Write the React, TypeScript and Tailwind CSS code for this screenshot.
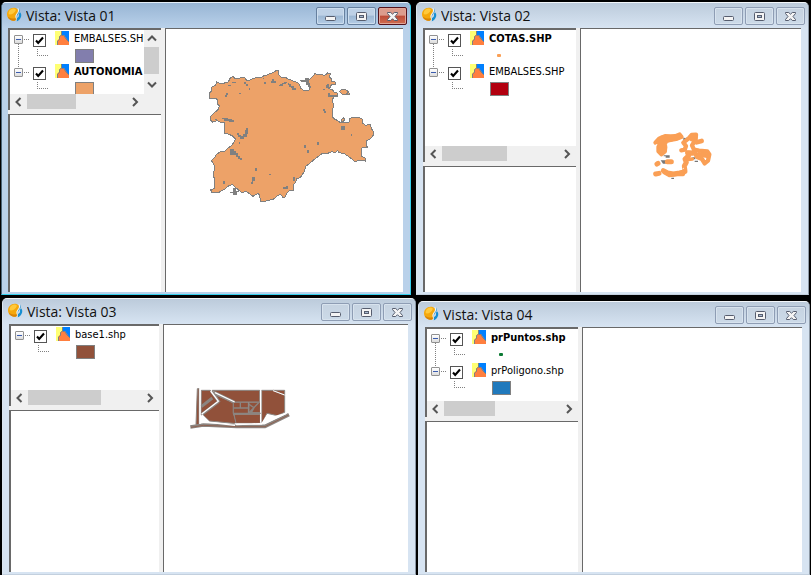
import { useState } from "react";
import type { ReactNode } from "react";
import clsx from "clsx";

type Layer = {
  name: string;
  bold?: boolean;
  color: string;
  symbol: "polygon" | "point";
};

type ViewWindowProps = {
  title: string;
  layers: Layer[];
  active?: boolean;
  sideClass?: string;
  treeClass: string;
  thumbClass: string;
  verticalScroll?: boolean;
  children?: ReactNode;
};

export default function App() {
  return (
    <main className="flex min-h-screen flex-col overflow-hidden bg-black pt-[2px] font-['Open_Sans','Noto_Sans',sans-serif]">
      <div className="flex h-[293px] gap-[5px] pl-px pr-[2px]">
        <div className="flex min-w-0 grow-[410] basis-0">
          <ViewWindow
            title="Vista: Vista 01"
            active
            treeClass="h-[82px]"
            thumbClass="w-[49px]"
            verticalScroll
            layers={[
              { name: "EMBALSES.SHP", color: "#827ead", symbol: "polygon" },
              { name: "AUTONOMIA", bold: true, color: "#eda268", symbol: "polygon" },
            ]}
          >
            <RegionMap />
          </ViewWindow>
        </div>
        <div className="flex min-w-0 grow-[393] basis-0">
          <ViewWindow
            title="Vista: Vista 02"
            treeClass="h-[134px]"
            thumbClass="w-[65px]"
            layers={[
              { name: "COTAS.SHP", bold: true, color: "#fa9f55", symbol: "point" },
              { name: "EMBALSES.SHP", color: "#b2000f", symbol: "polygon" },
            ]}
          >
            <PointsMap />
          </ViewWindow>
        </div>
      </div>

      <div className="mt-[3px] flex flex-1 gap-[2px] pl-[2px] pr-px">
        <div className="flex min-w-0 grow-[414] basis-0">
          <ViewWindow
            title="Vista: Vista 03"
            sideClass="w-[150px]"
            treeClass="h-[82px]"
            thumbClass="w-[73px]"
            layers={[{ name: "base1.shp", color: "#91513a", symbol: "polygon" }]}
          >
            <ParcelMap />
          </ViewWindow>
        </div>
        <div className="flex min-w-0 grow-[392] basis-0 pt-[3px]">
          <ViewWindow
            title="Vista: Vista 04"
            treeClass="h-[90px]"
            thumbClass="w-[51px]"
            layers={[
              { name: "prPuntos.shp", bold: true, color: "#0b7a33", symbol: "point" },
              { name: "prPoligono.shp", color: "#2079bc", symbol: "polygon" },
            ]}
          />
        </div>
      </div>
    </main>
  );
}

function ViewWindow({
  title,
  layers,
  active = false,
  sideClass = "w-[153px]",
  treeClass,
  thumbClass,
  verticalScroll = false,
  children,
}: ViewWindowProps) {
  return (
    <section
      aria-label={title}
      className={clsx(
        "flex min-w-0 flex-1 flex-col rounded-t-[5px] border",
        active
          ? "border-t-[#e4eef8] border-r-[#35d0ee] border-b-[#35d0ee] border-l-[#4a6478] bg-[#b9d1ea]"
          : "border-t-[#f2f6fa] border-r-[#8c98a5] border-b-[#c3d0de] border-l-[#dbe5ef] bg-[#d7e4f2]",
      )}
    >
      <header
        className={clsx(
          "flex h-[25px] shrink-0 items-start rounded-t-[4px] bg-linear-to-b pr-[3px] pl-[5px]",
          active ? "from-[#98b5d4] to-[#b9d1ea]" : "from-[#bccbdb] to-[#d7e4f2]",
        )}
      >
        <AppIcon />
        <h1 className="mt-[3px] ml-[4px] flex-1 truncate text-[14px] leading-[20px] text-[#111]">{title}</h1>
        <div className="mt-[4px] flex gap-[2px]">
          <CaptionButton kind="minimize" active={active} />
          <CaptionButton kind="maximize" active={active} />
          <CaptionButton kind="close" active={active} />
        </div>
      </header>

      <div className="mr-[7px] mb-[2px] ml-[6px] flex flex-1 bg-[#f0f0f0]">
        <div className={clsx("flex shrink-0 flex-col", sideClass)}>
          <div className={clsx("flex flex-col border-t-2 border-l-2 border-[#696969] bg-white", treeClass)}>
            <div className="flex min-h-0 flex-1">
              <ul className="min-w-0 flex-1 overflow-hidden">
                {layers.map((layer, i) => (
                  <LayerNode key={layer.name} layer={layer} last={i === layers.length - 1} />
                ))}
              </ul>
              {verticalScroll && <VerticalScrollbar />}
            </div>
            <div className={clsx("flex h-4 bg-[#f0f0f0] pl-px", verticalScroll ? "pr-[18px]" : "pr-px")}>
              <ScrollArrow dir="left" />
              <div className="flex-1">
                <div className={clsx("h-[15px] bg-[#cdcdcd]", thumbClass)} />
              </div>
              <ScrollArrow dir="right" />
            </div>
          </div>
          <div className="mt-[4px] flex-1 border-t border-l-2 border-[#696969] bg-white" />
        </div>
        <div className="ml-[4px] min-w-0 flex-1 overflow-hidden border-t border-l border-[#696969] bg-white">
          {children}
        </div>
      </div>
    </section>
  );
}

function LayerNode({ layer, last }: { layer: Layer; last: boolean }) {
  const [open, setOpen] = useState(true);
  const [visible, setVisible] = useState(true);

  return (
    <li className="relative">
      <div className="flex h-[18px] items-start pl-1">
        <button
          type="button"
          aria-label={`${open ? "Collapse" : "Expand"} ${layer.name}`}
          onClick={() => setOpen((prev) => !prev)}
          className="mt-[5px] flex size-[9px] shrink-0 items-center justify-center rounded-[1px] border border-[#919191] bg-linear-to-b from-white to-[#dcdcdc]"
        >
          <svg width="7" height="7" viewBox="0 0 7 7" shapeRendering="crispEdges">
            <path d={open ? "M1 3h5v1h-5z" : "M1 3h5v1h-5zM3 1h1v5h-1z"} fill="#3b5cae" />
          </svg>
        </button>
        <span className="mt-[9px] ml-px w-[5px] shrink-0 border-t border-dotted border-[#808080]" />
        <label className="flex min-w-0 items-start">
          <span className="relative mt-[4px] ml-1 size-[13px] shrink-0">
            <input
              type="checkbox"
              checked={visible}
              onChange={() => setVisible((prev) => !prev)}
              className="block size-[13px] appearance-none border border-[#555] bg-white"
            />
            {visible && (
              <svg className="pointer-events-none absolute inset-0" width="13" height="13" viewBox="0 0 13 13">
                <path d="M3 6.5 5.2 9 10 3.5" fill="none" stroke="#000" strokeWidth="2.1" />
              </svg>
            )}
          </span>
          <LayerIcon />
          <span
            className={clsx(
              "mt-px ml-[5px] text-[11px] leading-[16px] whitespace-nowrap text-black font-['DejaVu_Sans_Condensed','DejaVu_Sans',sans-serif]",
              layer.bold && "font-bold",
            )}
          >
            {layer.name}
          </span>
        </label>
      </div>
      {open && (
        <div className="flex h-[15px] items-start">
          <svg className="shrink-0" width="65" height="15" shapeRendering="crispEdges">
            <path d="M27.5 1V7.5H38" fill="none" stroke="#808080" strokeDasharray="1 1" />
          </svg>
          {layer.symbol === "polygon" ? (
            <span className="mt-px h-[14px] w-[19px] border border-[#808080]" style={{ backgroundColor: layer.color }} />
          ) : (
            <span className="mt-[6px] ml-[7px] h-[3px] w-[4px] rounded-[1px]" style={{ backgroundColor: layer.color }} />
          )}
        </div>
      )}
      {open && !last && (
        <svg className="absolute top-[14px] left-2" width="1" height="24" shapeRendering="crispEdges">
          <path d="M.5 0V24" stroke="#808080" strokeDasharray="1 1" />
        </svg>
      )}
    </li>
  );
}

function LayerIcon() {
  return (
    <svg className="mt-px ml-[9px] shrink-0" width="14" height="14" viewBox="0 0 14 14">
      <path d="M0 0h7v14H0z" fill="#ffff73" />
      <path d="M6 0h8v14H7z" fill="#0080ff" />
      <path d="M2 14V10L4 8V6L6 4h3l2 3 3 4v3z" fill="#ff7f3f" />
      <path d="M6.5 0v4L4.5 5.500v3L2.500 10v4M6.500 4.500h2.200L11 8l3 3" fill="none" stroke="#808080" />
    </svg>
  );
}

function VerticalScrollbar() {
  return (
    <div className="flex w-[17px] shrink-0 flex-col bg-[#f0f0f0] pr-px">
      <ScrollArrow dir="up" />
      <div className="h-[27px] w-[15px] bg-[#cdcdcd]" />
      <div className="mt-auto">
        <ScrollArrow dir="down" />
      </div>
    </div>
  );
}

const ARROWS = {
  left: "M9.500 4 5.500 8l4 4",
  right: "M6 4l4 4-4 4",
  up: "M4 10.500l4-4 4 4",
  down: "M4 5.500l4 4 4-4",
};

function ScrollArrow({ dir }: { dir: keyof typeof ARROWS }) {
  return (
    <button type="button" aria-label={`Scroll ${dir}`} className="flex h-[17px] w-4 shrink-0">
      <svg width="16" height="16" viewBox="0 0 16 16">
        <path d={ARROWS[dir]} fill="none" stroke="#555" strokeWidth="2" />
      </svg>
    </button>
  );
}

function CaptionButton({ kind, active }: { kind: "minimize" | "maximize" | "close"; active: boolean }) {
  return (
    <button
      type="button"
      aria-label={kind}
      className={clsx(
        "flex h-[18px] w-[29px] items-center justify-center rounded-[2px] border bg-linear-to-b",
        !active && "border-[#8e9db4] from-[#c6d3e1] to-[#ccdae8] inset-shadow-[0_0_0_1px_#d8e3ee]",
        active && kind !== "close" && "border-[#66809f] from-[#bed1e6] from-45% via-[#9cb7d3] via-50% to-[#b5cde6] inset-shadow-[0_0_0_1px_#cddeef]",
        active && kind === "close" && "border-[#54111b] from-[#dc9c8d] from-45% via-[#bd4b38] via-50% to-[#cf6d50] inset-shadow-[0_0_0_1px_#e0a597]",
      )}
    >
      <svg width="13" height="11" viewBox="0 0 13 11">
        {kind === "minimize" && <rect x="1.500" y="5.500" width="10" height="4" rx="1" fill="#f4f4f4" stroke="#565d6e" />}
        {kind === "maximize" && (
          <>
            <rect x="1.500" y="1.500" width="10" height="8" rx="1" fill="#f4f4f4" stroke="#565d6e" />
            <rect x="4.500" y="4.500" width="4" height="2" fill="#a7bad0" stroke="#565d6e" />
          </>
        )}
        {kind === "close" && (
          <path
            d="M1.500 1.500h3.200l1.800 1.700 1.800-1.700h3.200v1L9 5.500l2.500 3v1H8.300L6.500 7.700 4.700 9.500H1.500v-1L4 5.500l-2.500-3z"
            fill="#f4f4f4"
            stroke="#565d6e"
          />
        )}
      </svg>
    </button>
  );
}

function AppIcon() {
  return (
    <svg className="mt-[4px] shrink-0" width="15" height="16" viewBox="0 0 45 48">
      <path d="M20 2C8 2 0 11 0 22c0 10 7 17 17 19 7 1 11-2 11-6 0-6-2-8 1-13 5-5 6-11 3-15-2-3-7-5-12-5z" fill="#f5a80c" />
      <path d="M16 5C8 7 4 14 5 22c9 2 18-4 22-14-3-3-7-4-11-3z" fill="#ffc93c" />
      <path d="M2 29c4 9 12 13 20 12 4-1 5-4 5-7-8 1-17 0-25-5z" fill="#d98406" />
      <path d="M36 4c4 6 3 11-2 16-4 5-5 9-4 13 4-2 7-4 6-9 0-3 0-5 3-8 5 4 5 12 1 18-3 5-7 8-11 9 2-4 1-7 0-11-1-6 1-9 4-13 4-5 5-9 3-15z" fill="#168fd2" />
      <path d="M33 4c3 7 1 11-3 16-4 5-4 9-2 15" fill="none" stroke="#f5fbff" strokeWidth="3" />
    </svg>
  );
}

function RegionMap() {
  return (
    <svg className="mt-[31px] ml-[34px]" width="180" height="150" viewBox="0 0 540 450" shapeRendering="crispEdges">
      <path
        d="M29 114 29 98 35 93 35 81 47 76 50 66 58 69 70 70 85 66 92 52 99 50 104 55 118 55 125 51 134 52 139 60 148 61 158 56 168 53 184 53 192 47 200 46 208 41 219 38 229 31 236 33 237 46 243 51 256 52 264 57 272 60 285 65 296 70 303 85 310 91 327 91 331 80 323 66 330 57 341 47 345 40 352 44 366 44 374 46 383 39 391 41 389 51 394 57 393 63 405 66 405 73 394 75 389 84 381 83 380 76 387 73 383 82 391 88 397 89 403 97 413 100 412 108 403 109 398 117 400 140 396 155 397 170 404 178 412 181 419 186 447 186 450 175 460 171 475 171 487 177 488 190 497 196 511 193 514 205 520 215 520 226 511 236 503 241 498 242 498 258 503 261 497 263 486 263 484 276 485 290 496 294 496 303 480 302 464 304 449 292 431 280 417 278 413 272 405 278 395 275 383 280 369 279 355 289 342 299 326 313 317 319 313 335 301 353 291 355 288 364 280 376 280 391 269 391 262 398 255 411 248 411 241 403 231 408 221 417 210 420 199 422 193 425 181 424 179 403 172 401 159 409 150 402 139 394 125 398 116 390 104 380 97 374 87 377 73 388 63 393 55 398 36 398 32 389 42 386 44 363 41 347 43 318 37 305 33 303 43 293 51 282 61 275 75 273 83 265 96 256 107 237 98 228 85 222 74 220 74 188 64 187 50 182 38 186 32 181 32 169 43 158 54 149 58 138 51 130 51 118 44 114z"
        fill="#eda268"
        stroke="#808080"
        strokeWidth="3"
      />
      <path
        d="M419 94 424 89H436L443 92 450 104H443L442 98 439 103H427zM426 177 430 173 434 178 431 183H425z"
        fill="#eda268"
        stroke="#808080"
        strokeWidth="3"
      />
      <g fill="#808080">
        <path d="M300 59h15v-4h12v14h3v13h-5v-7h-8v-9h-14zM193 65h6v6h-6zM216 57h6v6h6v6h-14v-6h2zM188 54h5v3h-5zM238 75l7-3v-4h7v-3h9v5l-12 4v3h-11zM263 68h4v3h5v9h-4v-5h-5zM273 79h8v4h6v6h-11v-4h-3z" />
        <path d="M133 65h6v7h4v6h-6v-7h-4zM97 65h12v3H97zM85 75h7v3h-7zM77 98h6v6h-3v6h-5v-6h2zM117 98h6v3h-6zM147 84h3v6h-3zM368 87h7v4h-7zM385 98h6v8h8v4h-14zM400 104h14v6h-14z" />
        <path d="M368 147h6v5h4v6h-5v-5h-5zM424 197h11v12h-11zM453 222h4v5h-4zM312 255h6v8h-6zM320 269h6v9h-6zM351 245h6v10h-6zM207 342h5v4h-5zM166 323h5v10h-5zM155 350h9v13h-4v8h-7v-4h3v-6h-1zM68 363h6v8h-6z" />
        <path d="M65 174h18v4h12v8h-9v-4H72v-4h-7zM96 180h5v6h-5zM45 176h5v5h-5zM110 219h6v5h8v4h5v-5h6v-13h4v-5h6v17h-5v8h-7v7h-12v-5h-6v-6h-5zM90 266h12v7h6v7h6v7h6v7h6v7h-6v-5h-6v-6h-6v-5H90zM116 246h4v5h-4zM91 395h9v-11h8v8h8v5h-6v9H99v-7h-8zM248 380h10v-3h5v10h-15zM278 351h6v12h-6z" />
      </g>
    </svg>
  );
}

function PointsMap() {
  return (
    <svg className="mt-[91px] ml-[59px]" width="80" height="65" viewBox="0 0 240 195">
      <path d="M71 106h18v7H77v-4h-6zM62 121h18l-3 10h-8zM130 53h14v8h-14zM94 173h8v4h-8zM157 112h9v6h-9zM164 122h10v4h-10z" fill="#777" />
      <g fill="none" stroke="#fa9f55" strokeLinecap="round" strokeLinejoin="round">
        <path d="M46 68 57 56 75 48 92 49 106 48 119 43 125 51 112 56 80 62 65 62 55 81 55 94 64 103 75 94 76 79 66 73" strokeWidth="12" />
        <path d="M57 67 75 69 60 92 70 94M65 54 82 60 120 50M62 80 74 84M82 125 94 125M51 132 54 130M47 162 57 160" strokeWidth="15" />
        <path d="M70 152 83 159 100 162 119 159 135 155 133 138 139 127 135 117 146 107 143 99 157 100" strokeWidth="15" />
        <path d="M72 157 88 166 113 163 130 163M145 118 157 117" strokeWidth="11" />
        <path d="M124 91 134 89 138 78 130 68 146 55 155 45 168 44 167 58 156 76 162 89 177 92 202 94 208 103 204 122 194 130 186 117 171 111 164 99 143 97" strokeWidth="13" />
        <path d="M170 67 185 63M155 57 163 51M176 103 202 107" strokeWidth="14" />
      </g>
      <path d="M145 66l3-3 3 4-3 3zM127 145l4-2v5zM132 52l5-2v5z" fill="#fff" />
    </svg>
  );
}

function ParcelMap() {
  return (
    <svg className="mt-[55px] ml-[21px]" width="110" height="55" viewBox="0 0 330 165">
      <g fill="#91513a" stroke="#8b8581" strokeWidth="3">
        <path d="M37 26 42 26 42 134 33 134z" />
        <path d="M49 31h27l5 10 10 7 9 17-48 40h-4z" />
        <path d="M82 31h142v35h-78L95 40z" />
        <path d="M102 65 93 45l52 24v31l10 31-82-8-23-22z" />
        <path d="M230 31h35l34 15v51l-22 10-31-7-13 27h-3z" />
        <path d="M264 31h35v14z" />
        <path d="M147 103h79v27h-73z" />
        <path d="M145 67h45v34h-45zM192 67h34v31h-34z" />
      </g>
      <g fill="none" stroke="#8b8581" strokeWidth="9">
        <path d="M49 80 82 54M50 104 101 65M79 33 103 67M88 37l60 29" />
        <path d="M16 141 55 135 155 139H240L312 104" strokeWidth="11" />
      </g>
      <g fill="none" stroke="#fff" strokeWidth="4">
        <path d="M45 27v105M50 102 100 64M77 33 101 65M90 38l59 28M227 31v97M50 104l22 23 78 9" />
        <path d="m153 132h77l17-27 19 6 38-11-66 30-83 4z" fill="#fff" />
        <path d="m264 32 35 13" strokeWidth="3" />
      </g>
      <path d="M18 142 55 136 155 140H240L311 105" fill="none" stroke="#91513a" strokeWidth="2" />
      <path d="M145 84h45M166 67v17M145 100h82M192 98l29-30M192 73l15 10-8 15" fill="none" stroke="#8b8581" strokeWidth="4" />
    </svg>
  );
}
